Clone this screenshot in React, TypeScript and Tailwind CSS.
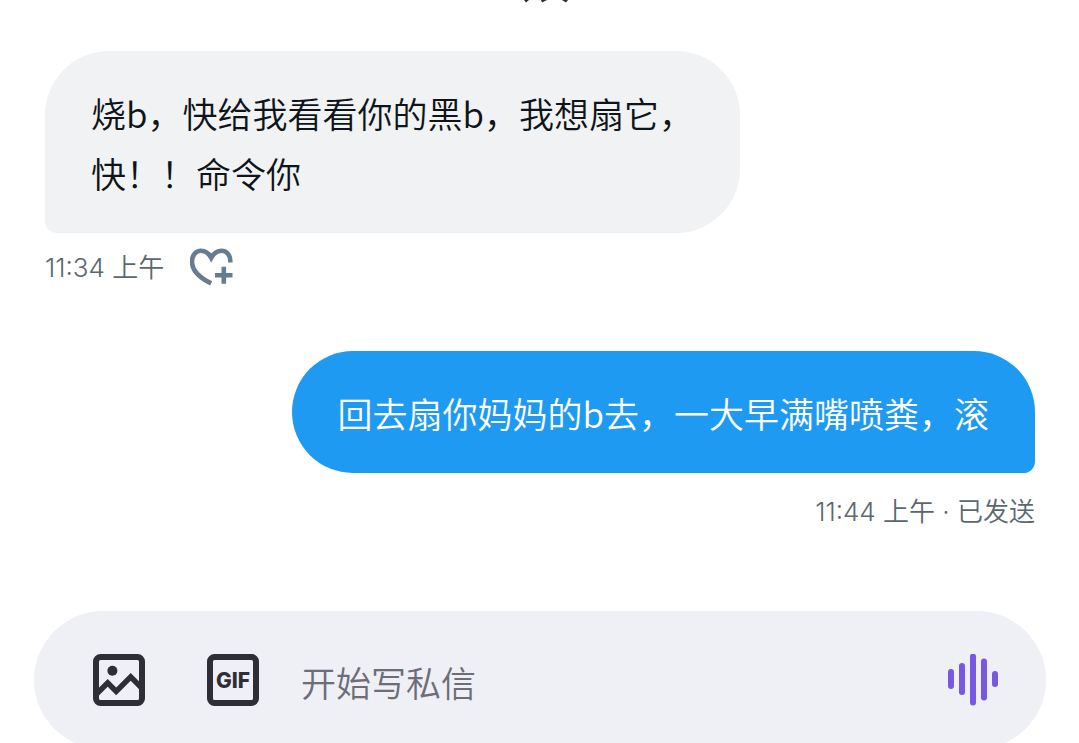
import React from 'react';

interface Message {
  id: number;
  lines: string[];
  time: string;
  status?: string;
  own?: boolean;
}

const messages: Message[] = [
  {
    id: 1,
    lines: ['烧b，快给我看看你的黑b，我想扇它，', '快！！命令你'],
    time: '11:34 上午',
  },
  {
    id: 2,
    lines: ['回去扇你妈妈的b去，一大早满嘴喷粪，滚'],
    time: '11:44 上午',
    status: '已发送',
    own: true,
  },
];

const HeartPlusIcon = () => (
  <svg className="h-[38px] w-[44px]" viewBox="0 0 44 38" fill="none" stroke="currentColor" strokeWidth={4.6}>
    <path d="M40.3 14.5V13C40.3 6.5 36.3 2.8 31.5 2.8C27 2.8 23.5 5.5 21.2 9.8C19 5.5 15.5 2.8 11 2.8C6 2.8 2 7 2 13.6C2 22 9 29.5 21.2 35.4" />
    <path d="M25 27.2H42.5M33.8 18.7V35.7" />
  </svg>
);

const ImageIcon = () => (
  <svg className="size-[52px]" viewBox="0 0 52 52" fill="none" stroke="currentColor">
    <rect x="3" y="3" width="46" height="46" rx="4.5" strokeWidth={6} />
    <circle cx="19.4" cy="16.8" r="5" fill="currentColor" stroke="none" />
    <path d="M4 39.5L14.7 28.8L23.2 37.4L37.7 22.9L48 33.2" strokeWidth={5.5} />
  </svg>
);

const GifIcon = () => (
  <svg className="size-[52px]" viewBox="0 0 52 52" fill="none">
    <rect x="3" y="3" width="46" height="46" rx="4.5" stroke="currentColor" strokeWidth={6} />
    <text x="26" y="34" textAnchor="middle" fill="currentColor" className="font-['Inter',sans-serif] text-[21px] font-extrabold">
      GIF
    </text>
  </svg>
);

const VoiceIcon = () => (
  <svg className="h-[52px] w-[50px]" viewBox="0 0 50 52" fill="none" stroke="currentColor" strokeWidth={6} strokeLinecap="round">
    <path d="M3 18V32M14 12V38M25 2.5V48.5M36 7.5V43.5M47 20V30" />
  </svg>
);

const MessageItem: React.FC<{ message: Message }> = ({ message }) => (
  <li className={`flex flex-col ${message.own ? 'items-end' : 'items-start'}`}>
    <div
      className={`px-[46px] pt-[32px] pb-[30px] font-['Noto_Sans_CJK_SC',sans-serif] text-[35px] leading-[60px] font-[350] ${
        message.own
          ? 'rounded-[64px] rounded-br-[12px] bg-[#1f9af2] text-white'
          : 'rounded-[64px] rounded-bl-[12px] bg-[#f0f2f4] text-[#0f1419]'
      }`}
    >
      {message.lines.map((line) => (
        <p key={line}>{line}</p>
      ))}
    </div>

    {/* Time and reaction */}
    <div
      className={`flex items-center gap-[26px] text-[26px] font-[350] text-[#5b6770] ${
        message.own ? 'h-[76px]' : 'h-[68px]'
      }`}
    >
      <span>
        {message.time}
        {message.status && ` · ${message.status}`}
      </span>
      {!message.own && (
        <button type="button" aria-label="添加心情" className="text-[#657d8f]">
          <HeartPlusIcon />
        </button>
      )}
    </div>
  </li>
);

export default function App() {
  return (
    <div className="flex h-screen flex-col overflow-hidden bg-white font-['Inter','Noto_Sans_CJK_SC',sans-serif]">
      {/* Bottom edge of the scrolled header */}
      <header className="flex h-[3px] shrink-0 justify-center pl-3">
        <svg className="h-[3px] w-[46px]" viewBox="0 0 46 3" fill="#2b2d31" aria-hidden="true">
          <path d="M1 0H6L3 2.5ZM18 0H24L19 2.5ZM39 0H45L43 2.5Z" />
        </svg>
      </header>

      <main className="shrink-0 pt-12 pr-11 pl-[45px]">
        <ul className="flex flex-col gap-[50px]">
          {messages.map((message) => (
            <MessageItem key={message.id} message={message} />
          ))}
        </ul>
      </main>

      <form
        className="mt-[62px] mr-[33px] ml-[34px] flex h-[138px] shrink-0 items-center rounded-[69px] bg-[#eff0f5] pr-12 pl-[59px]"
        onSubmit={(e) => e.preventDefault()}
      >
        <button type="button" aria-label="图片" className="text-[#2d2e36]">
          <ImageIcon />
        </button>
        <button type="button" aria-label="GIF" className="ml-[62px] text-[#2d2e36]">
          <GifIcon />
        </button>
        <input
          type="text"
          aria-label="私信"
          placeholder="开始写私信"
          className="ml-[42px] min-w-0 flex-1 bg-transparent pt-1 font-['Noto_Sans_CJK_SC',sans-serif] text-[35px] font-[350] text-[#0f1419] outline-none placeholder:text-[#6c6d76]"
        />
        <button type="button" aria-label="语音" className="text-[#7659e0]">
          <VoiceIcon />
        </button>
      </form>
    </div>
  );
}
